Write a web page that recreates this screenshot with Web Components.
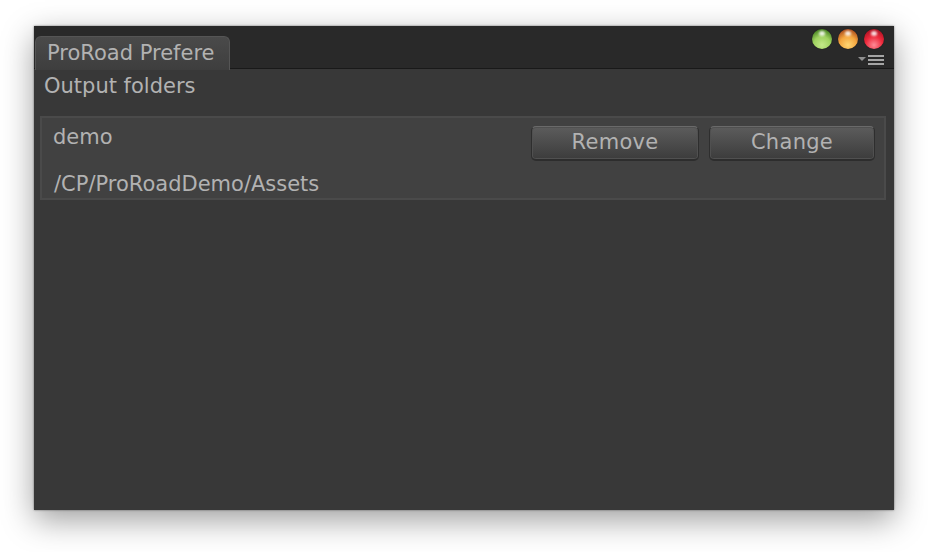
<!DOCTYPE html>
<html><head><meta charset="utf-8"><style>
html,body{margin:0;padding:0;background:#fff}
body{width:928px;height:552px;overflow:hidden;font-family:"DejaVu Sans",sans-serif}
</style></head><body>
<pref-window></pref-window>
<script>
class TrafficDot extends HTMLElement{
  constructor(){super();const c=this.getAttribute('c');const m={g:['#3f7a1c','#9fd25f','#c3e889'],o:['#a8481a','#f4a63f','#ffd673'],r:['#a81020','#ee2a3c','#ff8a96']}[c];
  this.attachShadow({mode:'open'}).innerHTML=`<style>:host{display:block;width:20px;height:20px;border-radius:50%;background:radial-gradient(circle at 50% 80%,${m[2]} 0,${m[1]} 45%,${m[0]} 85%,#222 100%);position:relative;box-shadow:0 0 1px #111}
  i{position:absolute;left:7px;top:2px;width:6px;height:5px;border-radius:50%;background:#fff;opacity:.85;filter:blur(.8px)}</style><i></i>`}
}
customElements.define('traffic-dot',TrafficDot);
class PrefButton extends HTMLElement{
  constructor(){super();this.attachShadow({mode:'open'}).innerHTML=`<style>:host{display:flex;align-items:center;justify-content:center;box-sizing:border-box;height:35px;border-radius:5px;border:1px solid #2e2e2e;border-top-color:#6a6a6a;border-bottom:2px solid #2d2d2d;background:linear-gradient(#5c5c5c,#3c3c3c);color:#b2b2b2;font:22px/1 "DejaVu Sans",sans-serif;font-size:21px;letter-spacing:.3px;padding-bottom:2px;box-shadow:inset 0 0 0 1px #505050}</style><slot></slot>`}
}
customElements.define('pref-button',PrefButton);
class FolderRow extends HTMLElement{
  constructor(){super();this.attachShadow({mode:'open'}).innerHTML=`<style>:host{display:grid;grid-template-columns:1fr 168px 166px;column-gap:10px;box-sizing:border-box;height:84px;margin:0 8px 0 6px;padding:0 9px 0 11px;background:#414141;border:2px solid #4a4a4a;color:#b2b2b2;font:21px/1 "DejaVu Sans",sans-serif;}
  .n{grid-column:1;grid-row:1;padding-top:9px;height:28px}.p{grid-column:1/4;grid-row:2;padding:9px 0 0 1px}
  .b1{grid-column:2;grid-row:1;padding-top:8px}.b2{grid-column:3;grid-row:1;padding-top:8px}
  </style><div class="n"><slot name="name"></slot></div><div class="b1"><pref-button>Remove</pref-button></div><div class="b2"><pref-button>Change</pref-button></div><div class="p"><slot name="path"></slot></div>`}
}
customElements.define('folder-row',FolderRow);
class PrefWindow extends HTMLElement{
  constructor(){super();this.attachShadow({mode:'open'}).innerHTML=`<style>
  :host{display:block;box-sizing:border-box;width:860px;height:484px;margin:26px 0 0 34px;background:#383838;box-shadow:0 10px 30px rgba(0,0,0,.38),0 0 2px rgba(0,0,0,.5);color:#b2b2b2;font:21px/1 "DejaVu Sans",sans-serif;display:flex;flex-direction:column}
  .bar{height:43px;flex:none;background:#292929;border-bottom:1px solid #191919;box-sizing:border-box;display:flex;justify-content:space-between;padding-top:10px;position:relative}
  .tab{margin-left:1px;width:195px;height:34px;box-sizing:border-box;background:linear-gradient(#4a4a4a,#3e3e3e);border-radius:6px 6px 0 0;border:1px solid #555;border-bottom:none;padding:6px 0 0 11px;color:#b2b2b2;font-size:21px;white-space:nowrap;overflow:hidden;position:relative;z-index:1}
  .ctl{display:flex;flex-direction:column;align-items:flex-end;padding-right:10px;margin-top:-7px}
  .dots{display:flex;gap:6px}
  .menu{display:flex;align-items:center;gap:2px;margin-top:6px}
  .body{flex:1;display:flex;flex-direction:column}
  .title{height:47px;box-sizing:border-box;padding:7px 0 0 10px}
  </style>
  <div class="bar"><div class="tab">ProRoad Prefere</div><div class="ctl"><div class="dots"><traffic-dot c="g"></traffic-dot><traffic-dot c="o"></traffic-dot><traffic-dot c="r"></traffic-dot></div>
  <div class="menu"><svg width="26" height="10" viewBox="0 0 26 10"><path d="M0 2h8L4 6z" fill="#8f8f8f"/><path d="M10 0h16v2H10zM10 4h16v2H10zM10 8h16v2H10z" fill="#a5a5a5"/></svg></div></div></div>
  <div class="body"><div class="title">Output folders</div><slot></slot></div>`}
}
customElements.define('pref-window',PrefWindow);
document.querySelector('pref-window').innerHTML='<folder-row><span slot="name">demo</span><span slot="path">/CP/ProRoadDemo/Assets</span></folder-row>';
</script></body></html>
